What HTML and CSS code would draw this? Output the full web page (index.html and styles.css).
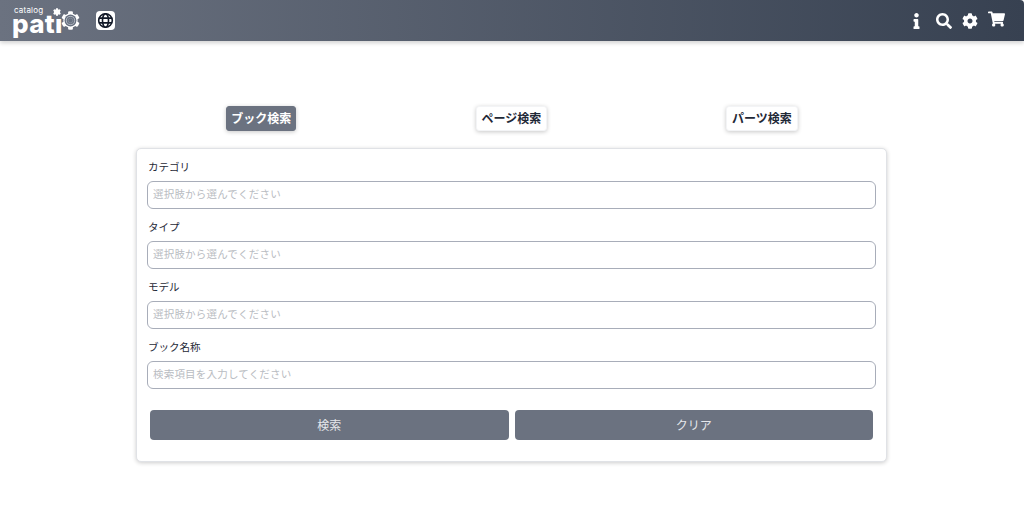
FILE: index.html
```html
<!DOCTYPE html>
<html lang="ja">
<head>
<meta charset="utf-8">
<title>patio</title>
<link rel="stylesheet" href="styles.css">
</head>
<body>
<header class="topbar">
  <div class="brand">
    <div class="logo">
      <span class="logo-small">catalog</span>
      <span class="logo-main">pat<span class="logo-i">ı</span></span>
      <svg class="logo-dot" viewBox="0 0 512 512"><path fill="#fff" d="M487.4 315.7l-42.6-24.6c4.3-23.2 4.3-47 0-70.2l42.6-24.6c4.9-2.8 7.1-8.6 5.5-14-11.1-35.6-30-67.8-54.7-94.6-3.8-4.1-10-5.1-14.8-2.3L380.8 110c-17.9-15.4-38.5-27.3-60.8-35.1V25.8c0-5.6-3.9-10.5-9.4-11.7-36.7-8.2-74.3-7.8-109.2 0-5.5 1.2-9.4 6.1-9.4 11.7V75c-22.2 7.9-42.8 19.8-60.8 35.1L88.7 85.5c-4.9-2.8-11-1.9-14.8 2.3-24.7 26.7-43.6 58.9-54.7 94.6-1.7 5.4.6 11.2 5.5 14L67.3 221c-4.3 23.2-4.3 47 0 70.2l-42.6 24.6c-4.9 2.8-7.1 8.6-5.5 14 11.1 35.6 30 67.8 54.7 94.6 3.8 4.1 10 5.1 14.8 2.3l42.6-24.6c17.9 15.4 38.5 27.3 60.8 35.1v49.2c0 5.6 3.9 10.5 9.4 11.7 36.7 8.2 74.3 7.8 109.2 0 5.5-1.2 9.4-6.1 9.4-11.7v-49.2c22.2-7.9 42.8-19.8 60.8-35.1l42.6 24.6c4.9 2.8 11 1.9 14.8-2.3 24.7-26.7 43.6-58.9 54.7-94.6 1.5-5.5-.7-11.3-5.6-14.1z"/></svg>
      <svg class="logo-gear" viewBox="0 0 512 512"><path fill="#fff" d="M487.4 315.7l-42.6-24.6c4.3-23.2 4.3-47 0-70.2l42.6-24.6c4.9-2.8 7.1-8.6 5.5-14-11.1-35.6-30-67.8-54.7-94.6-3.8-4.1-10-5.1-14.8-2.3L380.8 110c-17.9-15.4-38.5-27.3-60.8-35.1V25.8c0-5.6-3.9-10.5-9.4-11.7-36.7-8.2-74.3-7.8-109.2 0-5.5 1.2-9.4 6.1-9.4 11.7V75c-22.2 7.9-42.8 19.8-60.8 35.1L88.7 85.5c-4.9-2.8-11-1.9-14.8 2.3-24.7 26.7-43.6 58.9-54.7 94.6-1.7 5.4.6 11.2 5.5 14L67.3 221c-4.3 23.2-4.3 47 0 70.2l-42.6 24.6c-4.9 2.8-7.1 8.6-5.5 14 11.1 35.6 30 67.8 54.7 94.6 3.8 4.1 10 5.1 14.8 2.3l42.6-24.6c17.9 15.4 38.5 27.3 60.8 35.1v49.2c0 5.6 3.9 10.5 9.4 11.7 36.7 8.2 74.3 7.8 109.2 0 5.5-1.2 9.4-6.1 9.4-11.7v-49.2c22.2-7.9 42.8-19.8 60.8-35.1l42.6 24.6c4.9 2.8 11 1.9 14.8-2.3 24.7-26.7 43.6-58.9 54.7-94.6 1.5-5.5-.7-11.3-5.6-14.1z"/><circle cx="256" cy="256" r="160" fill="#667080"/><circle cx="256" cy="256" r="110" fill="none" stroke="#c4c8cf" stroke-width="22"/><circle cx="256" cy="256" r="62" fill="none" stroke="#9aa0ab" stroke-width="14"/></svg>
    </div>
    <div class="globe">
      <svg viewBox="0 0 24 24" fill="none" stroke="#111827" stroke-width="2"><circle cx="12" cy="12" r="8.6"/><ellipse cx="12" cy="12" rx="3.8" ry="8.6"/><path d="M3.6 9h16.8M3.6 15h16.8"/></svg>
    </div>
  </div>
  <div class="actions">
    <svg class="icon icon-info" viewBox="0 0 192 512"><path d="M20 424.229h20V279.771H20c-11.046 0-20-8.954-20-20V212c0-11.046 8.954-20 20-20h112c11.046 0 20 8.954 20 20v212.229h20c11.046 0 20 8.954 20 20V492c0 11.046-8.954 20-20 20H20c-11.046 0-20-8.954-20-20v-47.771c0-11.046 8.954-20 20-20zM96 0C56.235 0 24 32.235 24 72s32.235 72 72 72 72-32.235 72-72S135.764 0 96 0z"/></svg>
    <svg class="icon" viewBox="0 0 512 512"><path d="M505 442.7L405.3 343c-4.5-4.5-10.6-7-17-7H372c27.6-35.3 44-79.7 44-128C416 93.1 322.9 0 208 0S0 93.1 0 208s93.1 208 208 208c48.3 0 92.7-16.4 128-44v16.3c0 6.4 2.5 12.5 7 17l99.7 99.7c9.4 9.4 24.6 9.4 33.9 0l28.3-28.3c9.4-9.4 9.4-24.6.1-34zM208 336c-70.7 0-128-57.2-128-128 0-70.7 57.2-128 128-128 70.7 0 128 57.2 128 128 0 70.7-57.2 128-128 128z"/></svg>
    <svg class="icon" viewBox="0 0 512 512"><path d="M487.4 315.7l-42.6-24.6c4.3-23.2 4.3-47 0-70.2l42.6-24.6c4.9-2.8 7.1-8.6 5.5-14-11.1-35.6-30-67.8-54.7-94.6-3.8-4.1-10-5.1-14.8-2.3L380.8 110c-17.9-15.4-38.5-27.3-60.8-35.1V25.8c0-5.6-3.9-10.5-9.4-11.7-36.7-8.2-74.3-7.8-109.2 0-5.5 1.2-9.4 6.1-9.4 11.7V75c-22.2 7.9-42.8 19.8-60.8 35.1L88.7 85.5c-4.9-2.8-11-1.9-14.8 2.3-24.7 26.7-43.6 58.9-54.7 94.6-1.7 5.4.6 11.2 5.5 14L67.3 221c-4.3 23.2-4.3 47 0 70.2l-42.6 24.6c-4.9 2.8-7.1 8.6-5.5 14 11.1 35.6 30 67.8 54.7 94.6 3.8 4.1 10 5.1 14.8 2.3l42.6-24.6c17.9 15.4 38.5 27.3 60.8 35.1v49.2c0 5.6 3.9 10.5 9.4 11.7 36.7 8.2 74.3 7.8 109.2 0 5.5-1.2 9.4-6.1 9.4-11.7v-49.2c22.2-7.9 42.8-19.8 60.8-35.1l42.6 24.6c4.9 2.8 11 1.9 14.8-2.3 24.7-26.7 43.6-58.9 54.7-94.6 1.5-5.5-.7-11.3-5.6-14.1zM256 336c-44.1 0-80-35.9-80-80s35.9-80 80-80 80 35.9 80 80-35.9 80-80 80z"/></svg>
    <svg class="icon icon-cart" viewBox="0 0 576 512"><path d="M528.12 301.319l47.273-208C578.806 78.301 567.391 64 551.99 64H159.208l-9.166-44.81C147.758 8.021 137.93 0 126.529 0H24C10.745 0 0 10.745 0 24v16c0 13.255 10.745 24 24 24h69.883l70.248 343.435C147.325 417.1 136 435.222 136 456c0 30.928 25.072 56 56 56s56-25.072 56-56c0-15.674-6.447-29.835-16.824-40h209.647C430.447 426.165 424 440.326 424 456c0 30.928 25.072 56 56 56s56-25.072 56-56c0-22.172-12.888-41.332-31.579-50.405l5.517-24.276c3.413-15.018-8.002-29.319-23.403-29.319H218.117l-6.545-32h293.145c11.206 0 20.92-7.754 23.403-18.681z"/></svg>
  </div>
</header>
<main class="content">
  <nav class="tabs">
    <button class="tab tab-active">ブック検索</button>
    <button class="tab">ページ検索</button>
    <button class="tab">パーツ検索</button>
  </nav>
  <section class="card">
    <div class="field">
      <label class="label">カテゴリ</label>
      <input class="input" placeholder="選択肢から選んでください">
    </div>
    <div class="field">
      <label class="label">タイプ</label>
      <input class="input" placeholder="選択肢から選んでください">
    </div>
    <div class="field">
      <label class="label">モデル</label>
      <input class="input" placeholder="選択肢から選んでください">
    </div>
    <div class="field">
      <label class="label">ブック名称</label>
      <input class="input" placeholder="検索項目を入力してください">
    </div>
    <div class="buttons">
      <button class="btn">検索</button>
      <button class="btn">クリア</button>
    </div>
  </section>
</main>
</body>
</html>
```
FILE: styles.css
```css
* { box-sizing: border-box; }
html, body { margin: 0; height: 100%; }
body {
  background: #fff;
  font-family: Inter, "Noto Sans CJK JP", sans-serif;
  color: #1f2937;
  overflow: hidden;
}
.topbar {
  height: 41px;
  display: flex;
  align-items: center;
  justify-content: space-between;
  padding: 0 19px 0 13px;
  background: linear-gradient(to right, #6b7280, #374151);
  border-top-right-radius: 4px;
  box-shadow: 0 2px 4px rgba(0,0,0,.18);
}
.brand { display: flex; align-items: center; gap: 15px; }
.logo {
  position: relative;
  width: 68px;
  height: 41px;
  color: #fff;
}
.logo-small {
  position: absolute;
  left: 1px;
  top: 7px;
  font: 400 8px/7px Inter, sans-serif;
  letter-spacing: .2px;
}
.logo-main {
  position: absolute;
  left: -1px;
  top: 15px;
  font: 800 26px/17px Inter, sans-serif;
  letter-spacing: .3px;
}
.logo-dot {
  position: absolute;
  left: 40px;
  top: 8px;
  width: 8px;
  height: 8px;
}
.logo-gear {
  position: absolute;
  left: 48px;
  top: 11px;
  width: 19px;
  height: 19px;
}
.globe {
  width: 19px;
  height: 19px;
  background: #fff;
  border-radius: 4px;
  display: flex;
  align-items: center;
  justify-content: center;
}
.globe svg { width: 19px; height: 19px; }
.actions { display: flex; align-items: center; gap: 10px; }
.icon { width: 16px; height: 16px; fill: #fff; display: block; }
.icon-info { width: 7px; height: 16px; margin-right: 6px; }
.icon-cart { width: 17px; margin-top: -3px; }
.content { margin: 65px 137px 0 136px; }
.tabs {
  display: grid;
  grid-template-columns: repeat(3, 1fr);
  justify-items: center;
  margin-bottom: 17px;
}
.tab {
  height: 25px;
  padding: 0 5px;
  border: 1px solid #f3f4f6;
  border-radius: 3px;
  background: #fff;
  color: #1f2937;
  font: 700 12px/1 Inter, "Noto Sans CJK JP", sans-serif;
  box-shadow: 0 1px 4px rgba(0,0,0,.22);
}
.tab-active { padding: 0 4px; background: #6b7280; border-color: #6b7280; color: #fff; }
.card {
  height: 314px;
  padding: 10px 10px 0;
  border: 1px solid #e0e2e6;
  border-radius: 5px;
  background: #fff;
  box-shadow: 0 1px 4px rgba(0,0,0,.2);
}
.field { height: 60px; }
.label {
  display: block;
  height: 22px;
  padding: 2px 0 0 1px;
  font-size: 10.5px;
  line-height: 14px;
  color: #1f2937;
}
.input {
  display: block;
  width: 100%;
  height: 28px;
  padding: 0 5px 1px;
  border: 1px solid #a8adb9;
  border-radius: 6px;
  background: #fff;
  font: 10.5px Inter, "Noto Sans CJK JP", sans-serif;
  letter-spacing: .2px;
}
.input::placeholder { color: #b9bcc2; opacity: 1; }
.buttons {
  display: flex;
  gap: 6px;
  padding: 0 3px;
  margin-top: 11px;
}
.btn {
  flex: 1;
  height: 30px;
  padding: 0 0 2px;
  border: 0;
  border-radius: 4px;
  background: #6b7280;
  color: #e5e7eb;
  font: 12px Inter, "Noto Sans CJK JP", sans-serif;
}
```
